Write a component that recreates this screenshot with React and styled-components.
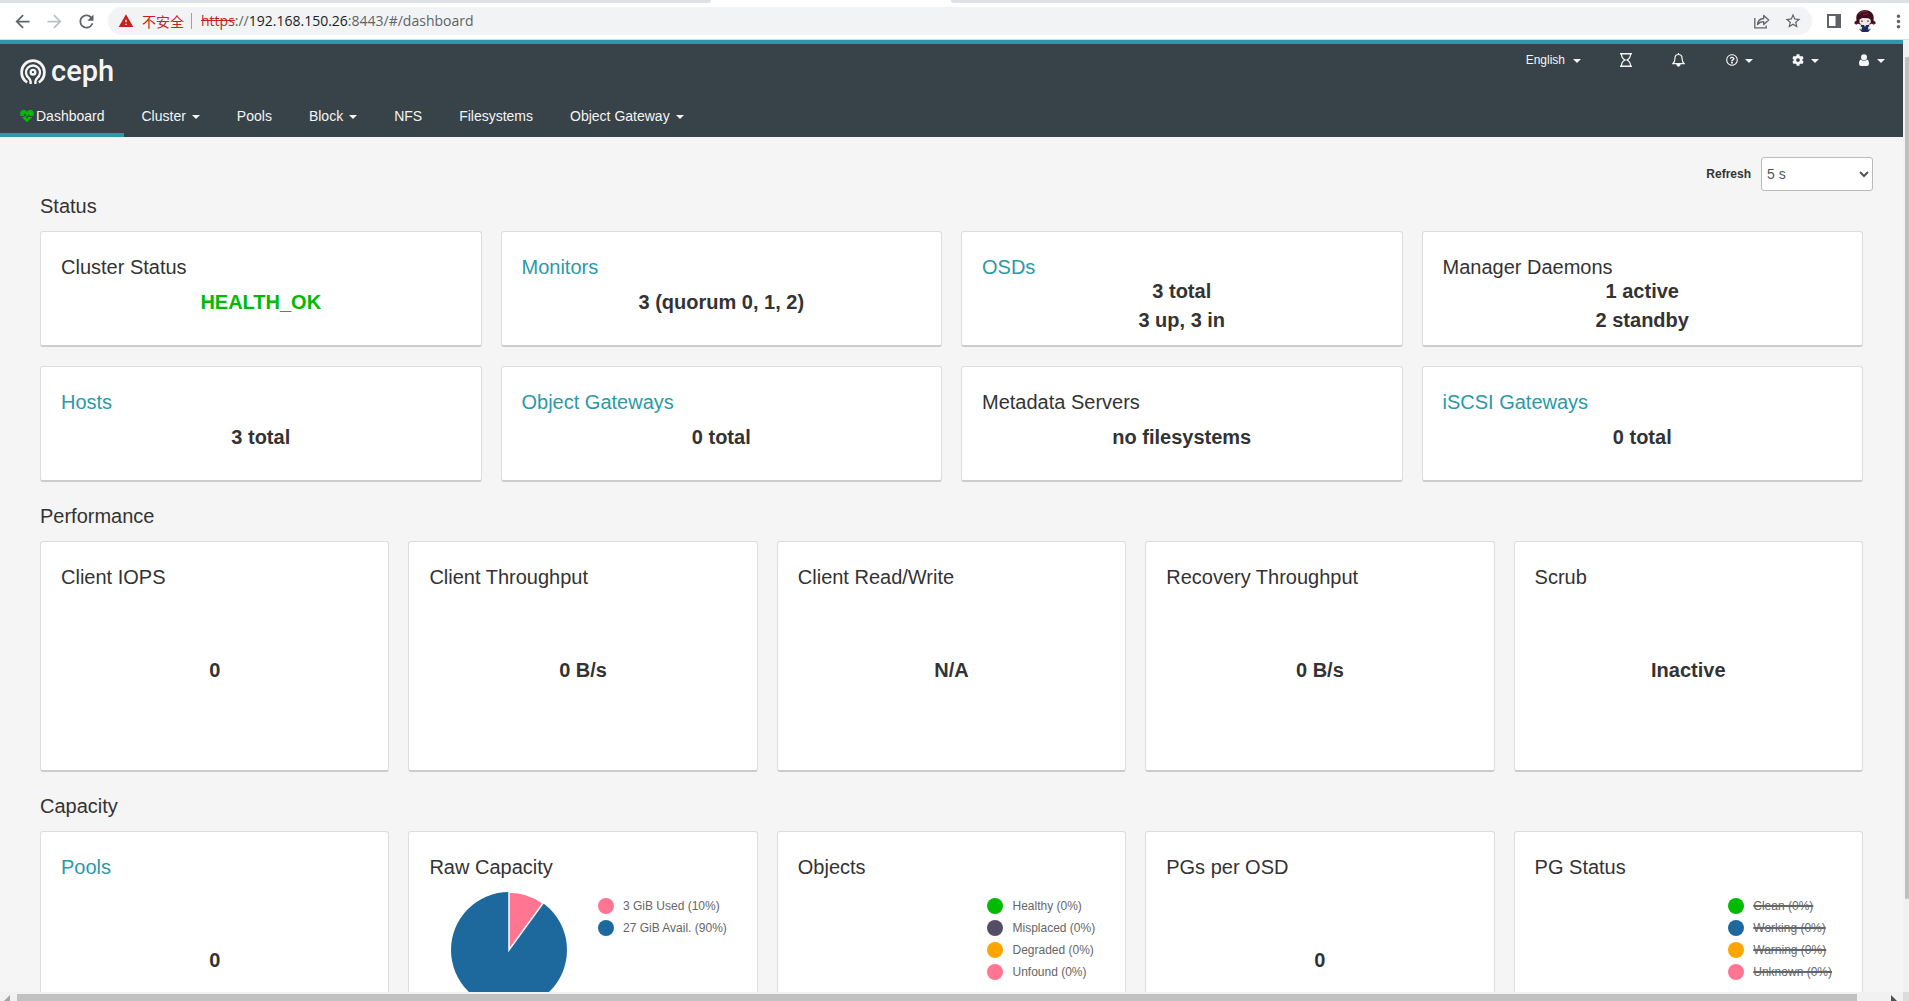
import React, { useState } from "react";
import styled, { createGlobalStyle, css } from "styled-components";
import { FaCog, FaHeartbeat, FaRegQuestionCircle } from "react-icons/fa";
import {
  MdArrowBack,
  MdArrowForward,
  MdMoreVert,
  MdRefresh,
  MdStarBorder,
  MdWarning,
} from "react-icons/md";

const colors = {
  teal: "#2b99a8",
  navbar: "#374249",
  page: "#f5f5f5",
  text: "#333333",
  green: "#00bb00",
  blue: "#1d699d",
  pink: "#ff7592",
  orange: "#ffa500",
  purple: "#564d65",
};

const GlobalStyle = createGlobalStyle`
  * {
    box-sizing: border-box;
  }
  body {
    margin: 0;
    font-family: "Liberation Sans", Arial, sans-serif;
    color: ${colors.text};
    background: ${colors.page};
  }
  button {
    border: 0;
    padding: 0;
    background: none;
    color: inherit;
    font: inherit;
    cursor: pointer;
  }
  a {
    text-decoration: none;
  }
`;

/* Browser chrome */

const Window = styled.div`
  display: flex;
  flex-direction: column;
  height: 100vh;
  overflow: hidden;
`;

const TabStrip = styled.div`
  display: flex;
  flex: 0 0 3px;
  background: #ffffff;
`;

const InactiveTabs = styled.div`
  flex: ${(p) => p.$grow};
  background: #dee1e6;
  border-radius: ${(p) => (p.$side === "left" ? "0 0 6px 0" : "0 0 0 6px")};
`;

const ActiveTab = styled.div`
  flex: 240;
`;

const Toolbar = styled.div`
  display: flex;
  align-items: center;
  flex: 0 0 37px;
  padding: 0 0 0 11px;
  background: #ffffff;
  border-bottom: 1px solid #dadce0;
`;

const ToolbarButton = styled.button`
  display: flex;
  align-items: center;
  justify-content: center;
  flex: 0 0 22px;
  height: 22px;
  margin-right: 10px;
  color: ${(p) => (p.$muted ? "#bdbfc2" : "#5f6368")};
`;

const AddressBar = styled.div`
  display: flex;
  align-items: center;
  flex: 1;
  height: 28px;
  margin-left: 1px;
  padding: 0 10px;
  border-radius: 14px;
  background: #f1f3f4;
`;

const Insecure = styled.button`
  display: flex;
  align-items: center;
  gap: 8px;
  padding-right: 7px;
  border-right: 1px solid #9aa0a6;
  color: #c5221f;
  font: 14px/16px "Noto Sans CJK SC", sans-serif;
`;

const Url = styled.div`
  flex: 1;
  padding-left: 9px;
  color: #5f6368;
  font: 14px/20px "Open Sans", sans-serif;

  s {
    color: #c5221f;
  }
  strong {
    color: #202124;
    font-weight: 400;
  }
`;

const AddressActions = styled.div`
  display: flex;
  gap: 14px;
  color: #5f6368;

  button {
    display: flex;
    align-items: center;
  }
`;

const ProfileActions = styled.div`
  display: flex;
  align-items: center;
  justify-content: space-between;
  width: 97px;
  padding-left: 15px;
  color: #5f6368;

  button {
    display: flex;
  }
`;

/* Scrollable viewport */

const Viewport = styled.div`
  display: grid;
  grid-template-columns: minmax(0, 1fr) 6px;
  grid-template-rows: minmax(0, 1fr) 9px;
  flex: 1;
  min-height: 0;
`;

const Page = styled.div`
  overflow: hidden;
  background: ${colors.page};
`;

const VerticalTrack = styled.div`
  padding: 17px 0 0 2px;
  background: #f1f1f1;
`;

const VerticalThumb = styled.div`
  height: 90%;
  background: #c1c1c1;
`;

const HorizontalTrack = styled.div`
  display: flex;
  justify-content: space-between;
  padding: 2px 6px 0 4px;
  background: #f1f1f1;
`;

const HorizontalThumb = styled.div`
  flex: 1;
  margin: 0 34px 0 7px;
  background: #c1c1c1;
`;

const ScrollCorner = styled.div`
  background: #dcdcdc;
`;

/* Dashboard header */

const Header = styled.header`
  border-top: 4px solid ${colors.teal};
  background: ${colors.navbar};
  color: #f5f5f5;
`;

const HeaderTop = styled.div`
  display: flex;
  justify-content: space-between;
  height: 49px;
`;

const Brand = styled.a`
  display: flex;
  align-items: center;
  gap: 5px;
  height: 26px;
  margin: 15px 0 0 20px;
  color: #f5f5f5;
  font: 500 29px/26px Roboto, sans-serif;

  span {
    padding-bottom: 2px;
  }
`;

const Utilities = styled.div`
  display: flex;
`;

const UtilityButton = styled.button`
  display: flex;
  align-items: center;
  gap: ${(p) => (p.$text ? 8 : 5)}px;
  height: 32px;
  padding: 0 18px;
  font-size: 12px;
`;

const IconBox = styled.span`
  display: flex;
  align-items: center;
  justify-content: center;
  width: ${(p) => p.$width || 17}px;
`;

const Caret = styled.span`
  margin-top: 2px;
  border-top: 4px solid currentColor;
  border-left: 4px solid transparent;
  border-right: 4px solid transparent;
`;

const Nav = styled.nav`
  display: flex;
`;

const navItem = css`
  display: flex;
  align-items: center;
  height: 44px;
  padding: 2px 19px 0 18px;
  color: #f5f5f5;
  font-size: 14px;
  line-height: 20px;
  box-shadow: ${(p) => (p.$active ? `inset 0 -4px ${colors.teal}` : "none")};
`;

const NavLink = styled.a`
  ${navItem}
`;

const NavMenu = styled.button`
  ${navItem}
  gap: 6px;
`;

/* Dashboard body */

const Content = styled.main`
  padding: 20px 40px;
`;

const RefreshBar = styled.div`
  display: flex;
  align-items: center;
  justify-content: flex-end;
  gap: 10px;
  margin-right: -10px;

  label {
    font-size: 12px;
    font-weight: 700;
  }
`;

const RefreshSelect = styled.select`
  width: 112px;
  height: 34px;
  padding: 0 1px;
  border: 1px solid #bbbbbb;
  border-radius: 3px;
  background: #ffffff;
  color: #555555;
  font: 14px "Liberation Sans", Arial, sans-serif;
`;

const Section = styled.section`
  margin-bottom: 19px;
`;

const SectionTitle = styled.h2`
  margin: 0;
  padding: 3px 0 13px;
  font-size: 20px;
  font-weight: 400;
  line-height: 24px;
`;

const CardGrid = styled.div`
  display: grid;
  grid-template-columns: repeat(${(p) => p.$columns}, minmax(0, 1fr));
  grid-auto-rows: ${(p) => (p.$tall ? 231 : 116)}px;
  gap: 19px;
`;

const CardBox = styled.article`
  display: flex;
  flex-direction: column;
  padding: 20px 20px 22px;
  border: 1px solid #dddddd;
  border-bottom: 2px solid #cccccc;
  border-radius: 3px;
  background: #ffffff;
`;

const CardTitle = styled.h3`
  margin: 0;
  font-size: 20px;
  font-weight: 400;
  line-height: 30px;

  a {
    color: ${colors.teal};
  }
`;

const CardValue = styled.div`
  display: flex;
  flex: 1;
  flex-direction: column;
  align-items: center;
  justify-content: center;
  min-height: 0;
  padding-top: ${(p) => (p.$multiline ? 6 : 0)}px;
  color: ${(p) => p.$color || colors.text};
  font-size: 20px;
  font-weight: 700;
  line-height: 29px;
`;

const ChartRow = styled.div`
  display: flex;
  justify-content: space-between;
  padding: 10px 10px 0 22px;
`;

const Legend = styled.ul`
  margin: 0 0 0 auto;
  padding: 3px 0 0;
  list-style: none;
`;

const LegendItem = styled.li`
  display: flex;
  align-items: center;
  gap: 9px;
  color: #666666;
  font-size: 12px;
  line-height: 22px;
  text-decoration: ${(p) => (p.$hidden ? "line-through 2px" : "none")};

  &::before {
    content: "";
    width: 16px;
    height: 16px;
    border-radius: 50%;
    background: ${(p) => p.$color};
  }
`;

function CephMark() {
  return (
    <svg width="26" height="26" viewBox="0 0 26 26" fill="none" stroke="currentColor" strokeWidth="2.8">
      <path d="M7.2 23.4C3.7 21.3 1.6 17.6 1.6 13a11.4 11.4 0 0 1 22.8 0c0 4.6-2.1 8.3-5.6 10.4" />
      <path d="M10.6 25v-2.4c0-1.6-.6-2.3-1.7-3.5A7 7 0 1 1 17.1 19.1c-1.1 1.2-1.7 1.9-1.7 3.5V25" strokeWidth="2.4" />
      <circle cx="13" cy="13.2" r="2.3" strokeWidth="2.4" />
    </svg>
  );
}

function HourglassIcon() {
  return (
    <svg width="12" height="14" viewBox="0 0 12 14" fill="none" stroke="currentColor">
      <path d="M0 .7h12M0 13.3h12" strokeWidth="1.4" />
      <path d="M1.5 1c0 3.4 1.4 5 3.6 6-2.2 1-3.6 2.6-3.6 6M10.5 1c0 3.4-1.4 5-3.6 6 2.2 1 3.6 2.6 3.6 6" strokeWidth="1.2" />
    </svg>
  );
}

function BellIcon() {
  return (
    <svg width="13" height="14" viewBox="0 0 13 14" fill="none" stroke="currentColor">
      <path d="M6.5 0v1.5M6.5 1.5C4.2 1.5 3 3.1 3 5c0 3.2-.9 4.7-2.2 5.7h11.4C10.9 9.700 10 8.200 10 5c0-1.900-1.200-3.500-3.500-3.500z" strokeWidth="1.2" />
      <path d="M4.800 11.500a1.700 1.700 0 0 0 3.400 0z" fill="currentColor" />
    </svg>
  );
}

function UserIcon() {
  return (
    <svg width="10" height="12" viewBox="0 0 10 12" fill="currentColor">
      <circle cx="5" cy="3.2" r="3" />
      <path d="M2 5.6C.5 6 0 7.600 0 9.500 0 11 .8 12 2 12h6c1.200 0 2-1 2-2.500 0-1.900-.5-3.500-2-3.900-.8.800-1.800 1.200-3 1.200s-2.200-.4-3-1.200z" />
    </svg>
  );
}

function ShareIcon() {
  return (
    <svg width="16" height="15" viewBox="0 0 16 15" fill="none" stroke="currentColor" strokeWidth="1.3">
      <path d="M.8 4v9.800h11.400v-2.300" />
      <path d="M3.500 10.500c.5-3.800 2.700-5.800 6.200-6V1.400l5 4.600-5 4.500V7.600c-2.700 0-4.600.9-6.200 2.900z" strokeLinejoin="round" />
    </svg>
  );
}

function SidePanelIcon() {
  return (
    <svg width="14" height="14" viewBox="0 0 14 14">
      <path d="M0 0h14v14H0zM2 2v10h6.500V2z" fill="currentColor" fillRule="evenodd" />
    </svg>
  );
}

function Avatar() {
  return (
    <svg width="22" height="22" viewBox="0 0 22 22">
      <path d="M3.500 10l-2.700 1.500-.5 2 2 1.300 2.500-1.500zM18.500 10l2.700 1.500.5 2-2 1.300-2.500-1.500z" fill="#5b1029" />
      <path d="M11 0c5.500 0 9 3.600 8.700 8.500-.1 3-1.400 5.500-3.700 6H6c-2.300-.5-3.600-3-3.700-6C2 3.600 5.500 0 11 0z" fill="#3b0d1e" />
      <path d="M5 4c2-2.300 4.500-3 8-2.300M9 5l5-1.500" stroke="#8d2040" strokeWidth="1.2" fill="none" />
      <path d="M5.500 9.500l3-1.500 6 .2 2.200 1.600v3L14 15H8l-2.500-2z" fill="#f8e8e4" />
      <path d="M7 10.500h2v1.300H7zM13 10.500h2v1.300h-2z" fill="#4b5b8a" />
      <path d="M7 15h8l1.500 4.500L14 22H8l-2.500-2.500z" fill="#1c2c57" />
      <path d="M6 16l2 1-.5 3-1.500-1zM16 16l-2 1 .5 3 1.500-1zM10 15h2l-1 2z" fill="#e3e8f3" />
    </svg>
  );
}

function CapacityPie() {
  return (
    <svg width="116" height="116" viewBox="0 0 116 116" role="img" aria-label="Raw Capacity">
      <circle cx="58" cy="58" r="58" fill={colors.blue} />
      <path d="M58 58V0a58 58 0 0 1 34.100 11.100z" fill={colors.pink} stroke="#ffffff" strokeWidth="1.5" />
    </svg>
  );
}

const navItems = [
  { label: "Dashboard", active: true },
  { label: "Cluster", menu: true },
  { label: "Pools" },
  { label: "Block", menu: true },
  { label: "NFS" },
  { label: "Filesystems" },
  { label: "Object Gateway", menu: true },
];

const statusCards = [
  { title: "Cluster Status", values: ["HEALTH_OK"], color: colors.green },
  { title: "Monitors", link: true, values: ["3 (quorum 0, 1, 2)"] },
  { title: "OSDs", link: true, values: ["3 total", "3 up, 3 in"] },
  { title: "Manager Daemons", values: ["1 active", "2 standby"] },
  { title: "Hosts", link: true, values: ["3 total"] },
  { title: "Object Gateways", link: true, values: ["0 total"] },
  { title: "Metadata Servers", values: ["no filesystems"] },
  { title: "iSCSI Gateways", link: true, values: ["0 total"] },
];

const performanceCards = [
  { title: "Client IOPS", values: ["0"] },
  { title: "Client Throughput", values: ["0 B/s"] },
  { title: "Client Read/Write", values: ["N/A"] },
  { title: "Recovery Throughput", values: ["0 B/s"] },
  { title: "Scrub", values: ["Inactive"] },
];

const capacityCards = [
  { title: "Pools", link: true, values: ["0"] },
  {
    title: "Raw Capacity",
    pie: true,
    legend: [
      ["3 GiB Used (10%)", colors.pink],
      ["27 GiB Avail. (90%)", colors.blue],
    ],
  },
  {
    title: "Objects",
    legend: [
      ["Healthy (0%)", colors.green],
      ["Misplaced (0%)", colors.purple],
      ["Degraded (0%)", colors.orange],
      ["Unfound (0%)", colors.pink],
    ],
  },
  { title: "PGs per OSD", values: ["0"] },
  {
    title: "PG Status",
    legendHidden: true,
    legend: [
      ["Clean (0%)", colors.green],
      ["Working (0%)", colors.blue],
      ["Warning (0%)", colors.orange],
      ["Unknown (0%)", colors.pink],
    ],
  },
];

function Card({ title, link, values, color, pie, legend, legendHidden }) {
  return (
    <CardBox>
      <CardTitle>{link ? <a href="#/">{title}</a> : title}</CardTitle>
      {values && (
        <CardValue $color={color} $multiline={values.length > 1}>
          {values.map((value) => (
            <span key={value}>{value}</span>
          ))}
        </CardValue>
      )}
      {legend && (
        <ChartRow>
          {pie && <CapacityPie />}
          <Legend>
            {legend.map(([label, dot]) => (
              <LegendItem key={label} $color={dot} $hidden={legendHidden}>
                {label}
              </LegendItem>
            ))}
          </Legend>
        </ChartRow>
      )}
    </CardBox>
  );
}

function CardSection({ title, cards, columns, tall }) {
  return (
    <Section>
      <SectionTitle>{title}</SectionTitle>
      <CardGrid $columns={columns} $tall={tall}>
        {cards.map((card) => (
          <Card key={card.title} {...card} />
        ))}
      </CardGrid>
    </Section>
  );
}

function BrowserBar() {
  return (
    <>
      <TabStrip>
        <InactiveTabs $grow={711} $side="left" />
        <ActiveTab />
        <InactiveTabs $grow={958} $side="right" />
      </TabStrip>
      <Toolbar>
        <ToolbarButton aria-label="Back"><MdArrowBack size={21} /></ToolbarButton>
        <ToolbarButton aria-label="Forward" $muted><MdArrowForward size={21} /></ToolbarButton>
        <ToolbarButton aria-label="Reload"><MdRefresh size={21} /></ToolbarButton>
        <AddressBar>
          <Insecure>
            <MdWarning size={16} />
            不安全
          </Insecure>
          <Url>
            <s>https</s>://<strong>192.168.150.26</strong>:8443/#/dashboard
          </Url>
          <AddressActions>
            <button aria-label="Share"><ShareIcon /></button>
            <button aria-label="Bookmark"><MdStarBorder size={18} /></button>
          </AddressActions>
        </AddressBar>
        <ProfileActions>
          <button aria-label="Side panel"><SidePanelIcon /></button>
          <button aria-label="Profile"><Avatar /></button>
          <button aria-label="Menu"><MdMoreVert size={21} /></button>
        </ProfileActions>
      </Toolbar>
    </>
  );
}

function DashboardHeader() {
  return (
    <Header>
      <HeaderTop>
        <Brand href="#/dashboard">
          <CephMark />
          <span>ceph</span>
        </Brand>
        <Utilities>
          <UtilityButton $text>English <Caret /></UtilityButton>
          <UtilityButton aria-label="Tasks"><IconBox><HourglassIcon /></IconBox></UtilityButton>
          <UtilityButton aria-label="Notifications"><IconBox><BellIcon /></IconBox></UtilityButton>
          <UtilityButton aria-label="Help"><IconBox><FaRegQuestionCircle size={12} /></IconBox><Caret /></UtilityButton>
          <UtilityButton aria-label="Settings"><IconBox><FaCog size={12} /></IconBox><Caret /></UtilityButton>
          <UtilityButton aria-label="User"><IconBox><UserIcon /></IconBox><Caret /></UtilityButton>
        </Utilities>
      </HeaderTop>
      <Nav>
        {navItems.map(({ label, active, menu }) =>
          menu ? (
            <NavMenu key={label}>{label}<Caret /></NavMenu>
          ) : (
            <NavLink key={label} href="#/" $active={active}>
              {active && <IconBox $width={18}><FaHeartbeat size={14} color={colors.green} /></IconBox>}
              {label}
            </NavLink>
          )
        )}
      </Nav>
    </Header>
  );
}

export default function App() {
  const [refresh, setRefresh] = useState("5");

  return (
    <Window>
      <GlobalStyle />
      <BrowserBar />
      <Viewport>
        <Page>
          <DashboardHeader />
          <Content>
            <RefreshBar>
              <label htmlFor="refresh">Refresh</label>
              <RefreshSelect id="refresh" value={refresh} onChange={(e) => setRefresh(e.target.value)}>
                <option value="5">5 s</option>
                <option value="10">10 s</option>
                <option value="30">30 s</option>
              </RefreshSelect>
            </RefreshBar>
            <CardSection title="Status" cards={statusCards} columns={4} />
            <CardSection title="Performance" cards={performanceCards} columns={5} tall />
            <CardSection title="Capacity" cards={capacityCards} columns={5} tall />
          </Content>
        </Page>
        <VerticalTrack>
          <VerticalThumb />
        </VerticalTrack>
        <HorizontalTrack>
          <svg width="6" height="7" viewBox="0 0 6 7"><path d="M6 1v6H0z" fill="#a3a3a3" /></svg>
          <HorizontalThumb />
          <svg width="6" height="7" viewBox="0 0 6 7"><path d="M0 1v6h6z" fill="#505050" /></svg>
        </HorizontalTrack>
        <ScrollCorner />
      </Viewport>
    </Window>
  );
}
